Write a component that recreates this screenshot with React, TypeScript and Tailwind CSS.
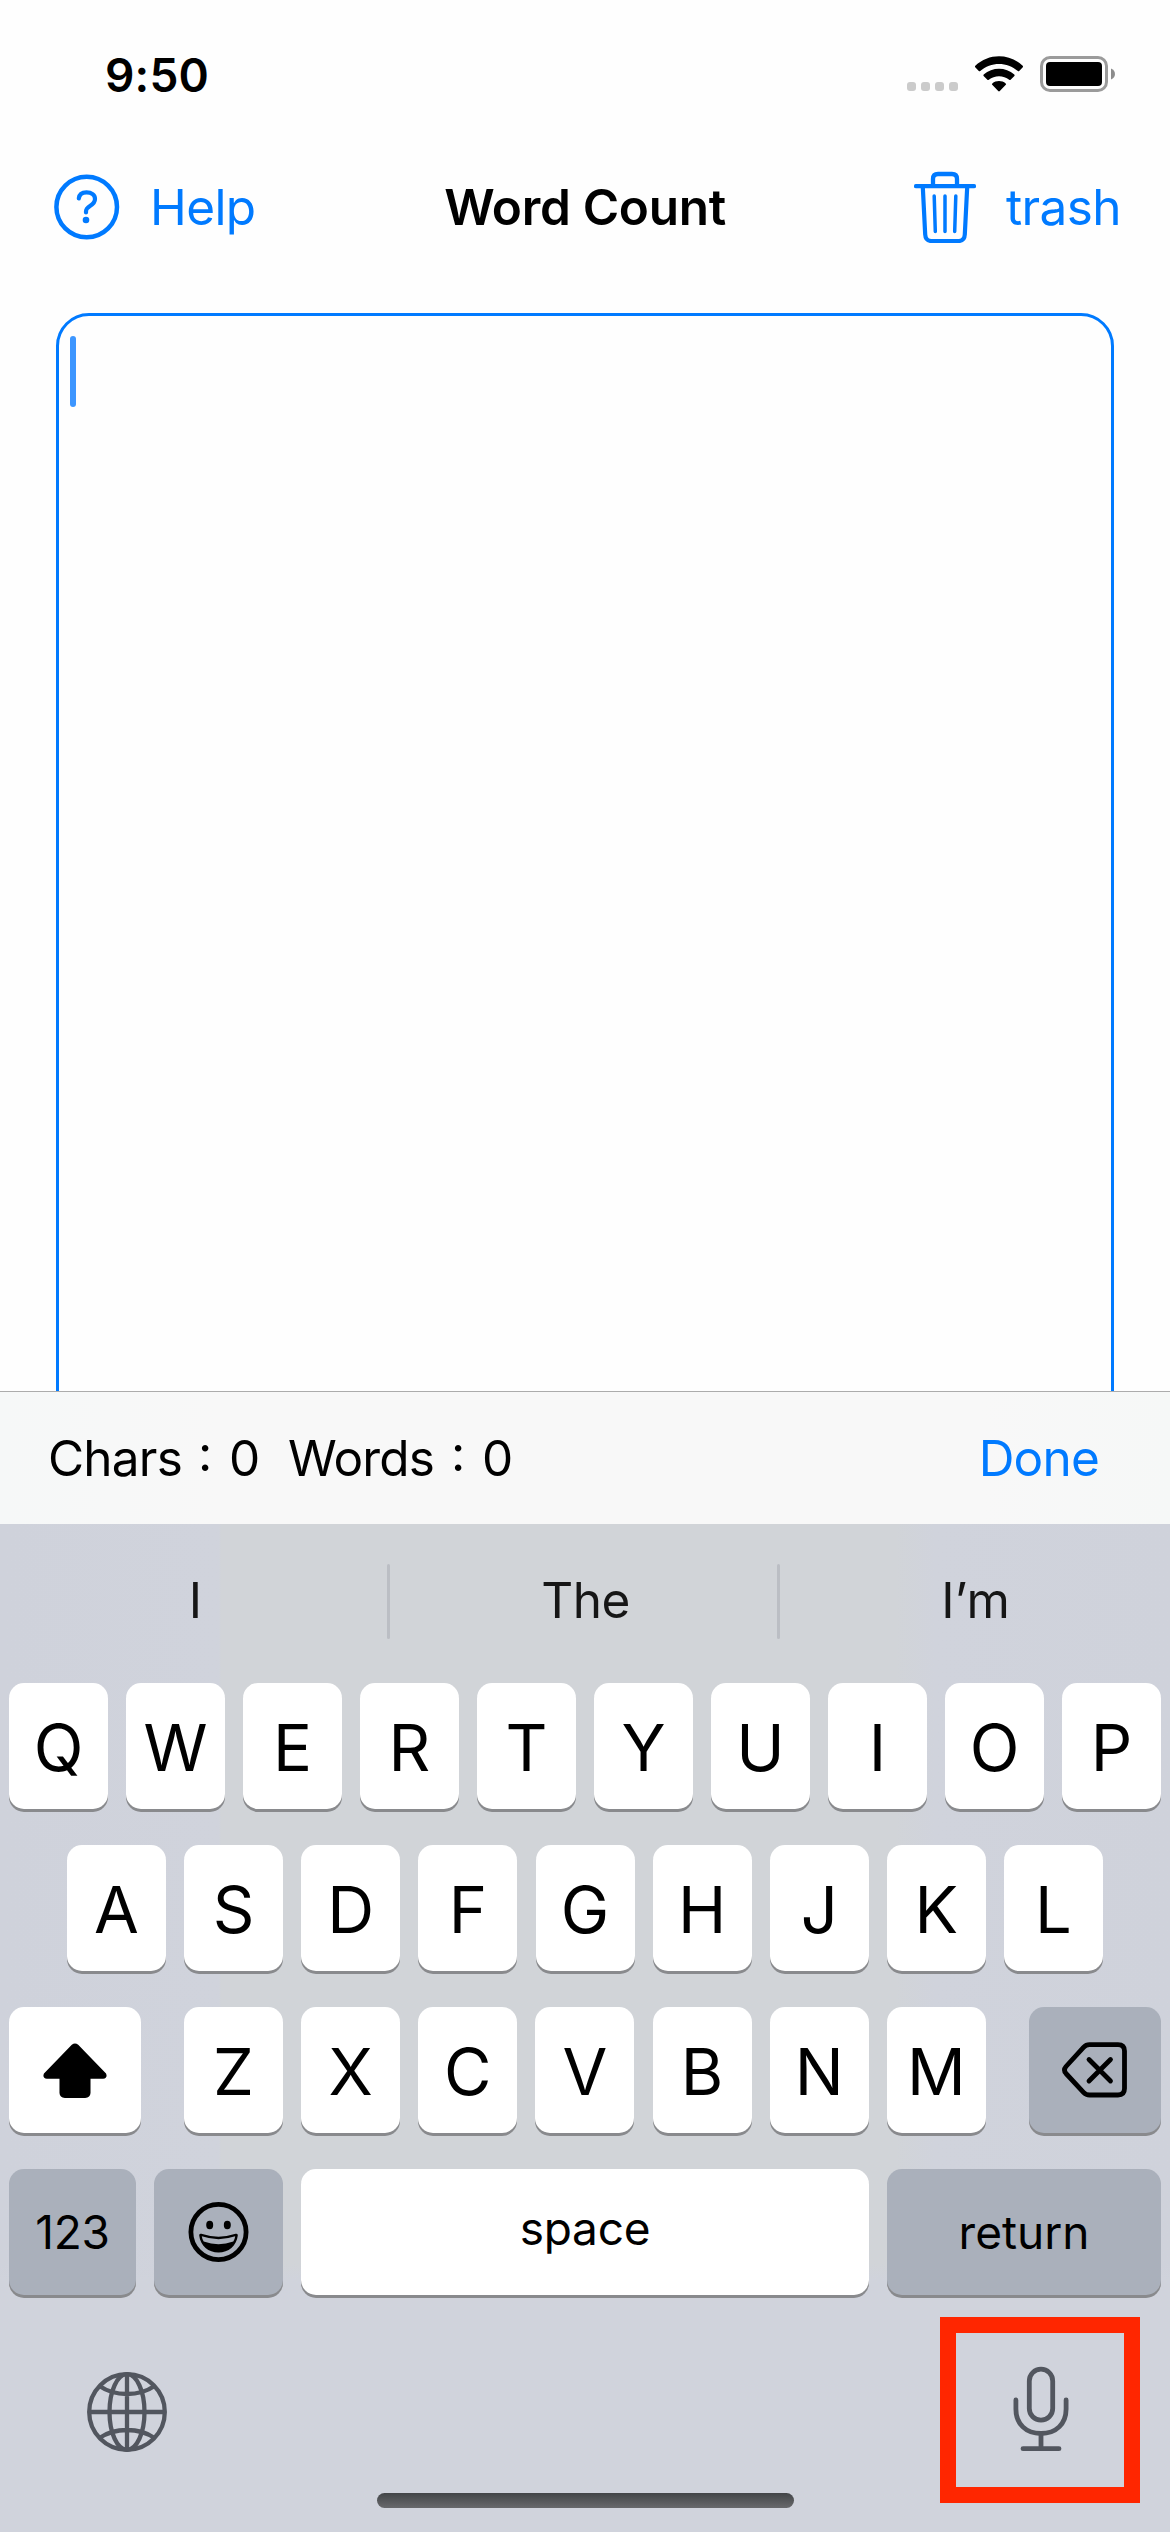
import type { ReactNode } from "react";

function Key({ children, dark = false, className = "" }: { children?: ReactNode; dark?: boolean; className?: string }) {
  return (
    <button
      className={`flex h-[126px] shrink-0 items-center justify-center rounded-[15px] text-black shadow-[0_3px_0_#898a8d] ${
        dark ? "bg-[#aab0bb]" : "bg-white"
      } ${className}`}
    >
      {children}
    </button>
  );
}

function LetterRow({ letters, className = "" }: { letters: string; className?: string }) {
  return (
    <div className={`flex justify-between ${className}`}>
      {letters.split("").map((l) => (
        <Key key={l} className="w-[99px] pt-[3px] text-[65px] leading-none">
          {l}
        </Key>
      ))}
    </div>
  );
}

function StatusBar() {
  return (
    <div className="flex h-[148px] items-center justify-between pl-[105px] pr-[54px]">
      <span className="pt-px text-[46px] font-semibold leading-none tracking-[0.2px]">9:50</span>
      <div className="flex h-[42px] items-center">
        <div className="mt-[25px] flex gap-[5px]">
          {[0, 1, 2, 3].map((i) => (
            <span key={i} className="h-[9px] w-[9px] rounded-[3px] bg-[#cbcbcb]" />
          ))}
        </div>
        <svg className="ml-4 h-[36px] w-[50px]" viewBox="0 0 50 36">
          <path d="M1.2 11.2 Q0.6 10.5 1.3 9.8 C14.5 -3 35.500 -3 48.7 9.8 Q49.400 10.5 48.800 11.200 L45.200 15 Q44.500 15.600 43.800 15 C33.300 5.500 16.700 5.500 6.200 15 Q5.500 15.600 4.800 15 Z" />
          <path d="M9.600 20 Q9 19.300 9.700 18.600 C18.300 10.900 31.700 10.900 40.300 18.600 Q41 19.300 40.400 20 L36.600 23.800 Q36 24.400 35.200 23.800 C29.500 18.900 20.500 18.900 14.800 23.800 Q14 24.400 13.400 23.800 Z" />
          <path d="M18.200 28.800 Q17.500 28.100 18.300 27.400 C22 24.300 28 24.300 31.700 27.400 Q32.500 28.100 31.800 28.800 L25.800 35 Q25 35.800 24.200 35 Z" />
        </svg>
        <svg className="ml-[16px] h-[36px] w-[76px]" viewBox="0 0 76 36">
          <rect x="1.500" y="1.500" width="65" height="33" rx="8.500" fill="none" stroke="#9b9b9b" strokeWidth="3" />
          <rect x="6" y="6" width="56" height="24" rx="4" />
          <path d="M71 12.500 C76.300 14.500 76.300 21.500 71 23.500 Z" fill="#8c8c8c" />
        </svg>
      </div>
    </div>
  );
}

function NavBar() {
  return (
    <div className="relative flex h-[118px] items-center justify-between pl-[54px] pr-[50px] text-[#007aff]">
      <button className="flex items-center gap-[30px]">
        <svg className="-mt-px h-[66px] w-[66px]" viewBox="0 0 66 66" fill="none" stroke="currentColor" strokeLinecap="round">
          <circle cx="32.700" cy="33" r="30.300" strokeWidth="4.500" />
          <path d="M24.800 24.500 C25.300 20 28.500 18.400 32.500 18.400 C37.500 18.400 41 21 41 25 C41 28.200 39.200 29.900 36.300 31.700 C33.300 33.600 32 35 32 37.500 V38.500" strokeWidth="4.200" />
          <circle cx="32" cy="46" r="3.300" fill="currentColor" stroke="none" />
        </svg>
        <span className="pt-px text-[49.500px] leading-none tracking-[-0.600px]">Help</span>
      </button>
      <div className="pointer-events-none absolute inset-0 flex items-center justify-center pt-[2px] text-[49.500px] font-semibold leading-none tracking-[-0.300px] text-black">
        Word Count
      </div>
      <button className="-mr-px flex items-center gap-[30px]">
        <svg className="h-[72px] w-[62px]" viewBox="0 0 62 72" fill="none" stroke="currentColor" strokeLinecap="round" strokeLinejoin="round">
          <path d="M2 15.200 H60" strokeWidth="4.300" />
          <path d="M19 14 V8 Q19 3 24 3 H38 Q43 3 43 8 V14" strokeWidth="4.300" />
          <path d="M8.800 16 L11.200 63.500 Q11.500 70 17.500 70 H44.500 Q50.500 70 50.800 63.500 L53.200 16" strokeWidth="4.200" />
          <path d="M20.200 25 L21.300 60.500 M31 25 V60.500 M41.800 25 L40.700 60.500" strokeWidth="3.500" />
        </svg>
        <span className="pt-px text-[49.500px] leading-none tracking-[-0.600px]">trash</span>
      </button>
    </div>
  );
}

function Stat({ label, className }: { label: string; className: string }) {
  return (
    <>
      <span className={`tracking-[-0.800px] ${className}`}>{label}</span>
      <span className="-mt-[5px] mb-[5px] w-[31px]">:</span>
    </>
  );
}

export default function App() {
  return (
    <div className="flex h-[2532px] w-[1170px] flex-col overflow-hidden bg-[#fefefe] font-['Inter',sans-serif] text-black">
      <StatusBar />
      <NavBar />

      <div className="h-[1125px] overflow-hidden px-[56px] pt-[47px]">
        <div className="h-[1200px] rounded-[33px] border-[3.500px] border-[#007aff] pl-[11px] pt-[20px]">
          <div className="h-[71px] w-[6px] rounded-full bg-[#3d96ff]" />
        </div>
      </div>

      <div className="flex h-[133px] items-center justify-between border-t border-[#acacac] bg-[linear-gradient(90deg,#f6f8f8_0px,#f8f8f8_220px,#f8f8f8_980px,#f6f8f7_1170px)] pl-[48px] pr-[71px] pt-px text-[49.500px] leading-none">
        <div className="flex pt-px">
          <Stat label="Chars" className="w-[150px]" />
          <span className="w-[59px]">0</span>
          <Stat label="Words" className="w-[163px]" />
          <span>0</span>
        </div>
        <button className="pt-px tracking-[-0.800px] text-[#007aff]">Done</button>
      </div>

      <div className="flex h-[1008px] flex-col bg-[linear-gradient(#d0d3dc00_740px,#d0d3dc_756px),linear-gradient(90deg,#cfd2db_0px,#d0d3dc_219px,#d1d4d8_221px,#d1d4d8_895px,#d0d3dc_935px,#cfd2db_1170px)]">
        <div className="flex h-[154px] items-center text-[49.500px] leading-none text-[#161616]">
          <div className="w-[387px] pl-[4px] text-center">I</div>
          <div className="h-[75px] w-[3px] rounded-full bg-[#bbbec4]" />
          <div className="w-[387px] pl-[4px] text-center tracking-[-0.500px]">The</div>
          <div className="h-[75px] w-[3px] rounded-full bg-[#bbbec4]" />
          <div className="flex-1 pl-px text-center">I’m</div>
        </div>

        <div className="flex flex-col gap-[36px] px-[9px] pt-[5px]">
          <LetterRow letters="QWERTYUIOP" />
          <LetterRow letters="ASDFGHJKL" className="px-[58px]" />
          <div className="flex justify-between">
            <Key className="w-[132px]">
              <svg className="h-[55px] w-[64px]" viewBox="0 0 66 56" preserveAspectRatio="none">
                <path d="M29.700 1.900 Q33 -0.700 36.300 1.900 L65 31 Q67 35.500 62 36.500 H49 V51 Q48.700 55.800 43.500 56 H22.500 Q17.300 55.800 17 51 V36.500 H4 Q-1 35.500 1 31 Z" />
              </svg>
            </Key>
            <LetterRow letters="ZXCVBNM" className="w-[802px]" />
            <Key dark className="w-[132px]">
              <svg className="h-[56px] w-[66px]" viewBox="0 0 66 56" fill="none" stroke="currentColor" strokeWidth="4.800" strokeLinecap="round" strokeLinejoin="round">
                <path d="M27.500 2.700 H56 Q62.500 2.700 62.500 9 V46.500 Q62.500 53 56 53 H27.500 Q24 53 21.500 50.300 L4 31.500 Q1 28 4 24.500 L21.500 5.400 Q24 2.700 27.500 2.700 Z" />
                <path d="M27 17.500 L48.500 39 M48.500 17.500 L27 39" />
              </svg>
            </Key>
          </div>
          <div className="flex justify-between">
            <Key dark className="w-[127px] text-[46px] leading-none tracking-[-0.200px]">123</Key>
            <Key dark className="w-[129px]">
              <svg className="h-[62px] w-[62px]" viewBox="0 0 62 62">
                <circle cx="30.500" cy="31" r="27.600" fill="none" stroke="black" strokeWidth="4.800" />
                <ellipse cx="21.700" cy="24" rx="3.500" ry="4.200" />
                <ellipse cx="39.300" cy="24" rx="3.500" ry="4.200" />
                <path d="M11.200 34.500 Q11 32.300 13.300 32.800 Q30.500 38.500 47.700 32.800 Q50 32.300 49.800 34.500 C48.500 45 40.500 51.500 30.500 51.500 C20.500 51.500 12.500 45 11.200 34.500 Z" />
                <path d="M13.800 35.300 Q30.500 41 47.200 35.300 Q46.800 38.500 45.300 40.500 Q30.500 45.800 15.700 40.500 Q14.200 38.500 13.800 35.300 Z" fill="#aab0bb" />
              </svg>
            </Key>
            <Key className="w-[568px] pb-[8px] text-[46px] leading-none tracking-[-0.300px]">space</Key>
            <Key dark className="w-[274px] text-[46px] leading-none">return</Key>
          </div>
        </div>

        <div className="relative flex flex-1 items-start justify-between pl-[86px] pr-[30px] pt-[22px]">
          <svg className="mt-[54px] h-[82px] w-[82px]" viewBox="0 0 82 82" fill="none" stroke="#52565f" strokeWidth="4.300">
            <circle cx="41" cy="41" r="37.800" />
            <ellipse cx="41" cy="41" rx="17.500" ry="37.800" />
            <path d="M41 3 V79 M3 41 H79 M13.500 15 Q25 23 41 23 Q57 23 68.500 15 M13.500 67 Q25 59 41 59 Q57 59 68.500 67" />
          </svg>
          <div className="flex h-[186px] w-[200px] items-center justify-center border-[16px] border-[#ff2600]">
            <svg className="-mt-[2px] ml-[4px] h-[86px] w-[58px]" viewBox="0 0 58 86" fill="none" stroke="#52565f" strokeWidth="4.800" strokeLinecap="round">
              <rect x="16.300" y="3.200" width="23.400" height="51" rx="11.700" />
              <path d="M2.900 34 V43 C2.900 58 13 67.500 28 67.500 C43 67.500 53.100 58 53.100 43 V34 M28 68 V82 M10 82.700 H46" />
            </svg>
          </div>
          <div className="absolute bottom-[24px] left-[377px] h-[15px] w-[417px] rounded-full bg-[linear-gradient(#434548,#68696c)]" />
        </div>
      </div>
    </div>
  );
}
